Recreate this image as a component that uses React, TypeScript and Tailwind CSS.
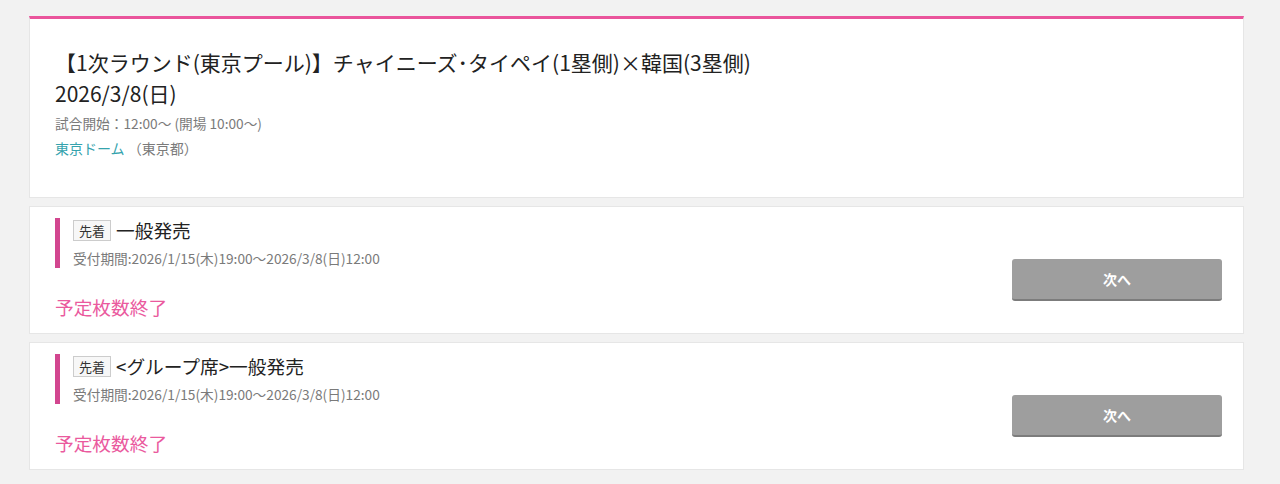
const font = { fontFamily: '"Noto Sans CJK JP", "Noto Sans", sans-serif' }

type Sale = {
  title: string
  period: string
}

const sales: Sale[] = [
  { title: "一般発売", period: "受付期間:2026/1/15(木)19:00〜2026/3/8(日)12:00" },
  { title: "<グループ席>一般発売", period: "受付期間:2026/1/15(木)19:00〜2026/3/8(日)12:00" },
]

function SaleCard({ sale }: { sale: Sale }) {
  return (
    <div className="mt-[8px] flex items-start border border-[#e6e6e6] bg-white pl-[25px] pr-[21px] pt-[11px] pb-[14px]">
      <div className="flex-1">
        <div className="border-l-[5px] border-[#d2468f] pl-[13px]">
          <div className="flex h-[24px] items-center">
            <span className="border border-[#cccccc] bg-[#f7f7f7] px-[5px] text-[13px] leading-[19px] text-[#333]">
              先着
            </span>
            <span className="ml-[5px] text-[18.7px] leading-[24px] text-[#222]">{sale.title}</span>
          </div>
          <div className="mt-[6px] text-[13.7px] leading-[20px] text-[#7a7a7a]">{sale.period}</div>
        </div>
        <div className="mt-[26px] text-[18.7px] leading-[25px] text-[#ea5a9e]">予定枚数終了</div>
      </div>
      <button className="mt-[41px] h-[42px] w-[210px] rounded-[3px] border-b-2 border-[#7c7c7c] bg-[#9e9e9e] text-[14px] font-bold text-white">
        次へ
      </button>
    </div>
  )
}

export default function App() {
  return (
    <div className="min-h-[484px] bg-[#f2f2f2] pt-[16px]" style={font}>
      <div className="ml-[29px] w-[1215px]">
        <div className="border-x border-b border-t-[3px] border-x-[#e6e6e6] border-b-[#e6e6e6] border-t-[#ea559c] bg-white pl-[25px] pt-[28px] pb-[38px]">
          <h1 className="text-[21px] font-normal leading-[31px] text-[#222]">
            【1次ラウンド(東京プール)】チャイニーズ･タイペイ(1塁側)×韓国(3塁側)
            <br />
            2026/3/8(日)
          </h1>
          <p className="mt-[4px] text-[13.7px] leading-[20px] text-[#7a7a7a]">試合開始：12:00〜 (開場 10:00〜)</p>
          <p className="mt-[4px] text-[14px] leading-[22px]">
            <span className="text-[#35a3ad]">東京ドーム</span>
            <span className="text-[#7a7a7a]"> （東京都）</span>
          </p>
        </div>
        {sales.map((s) => (
          <SaleCard key={s.title} sale={s} />
        ))}
      </div>
    </div>
  )
}
